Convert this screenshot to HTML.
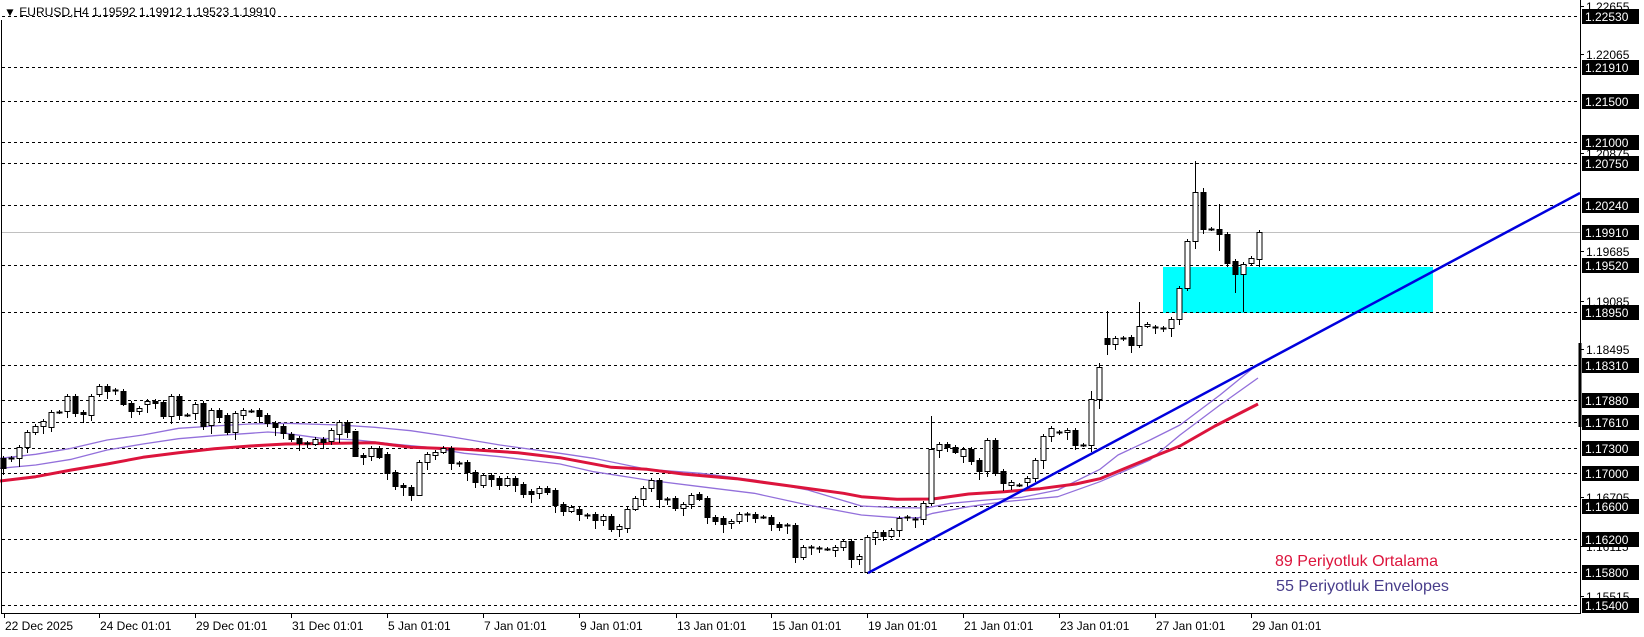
<!DOCTYPE html>
<html><head><meta charset="utf-8"><style>
html,body{margin:0;padding:0;background:#fff;}
svg{display:block;}
text{font-family:"Liberation Sans",sans-serif;}
</style></head><body>
<svg id="s" width="1644" height="637" xmlns="http://www.w3.org/2000/svg">
<rect width="1644" height="637" fill="#fff"/>
<g id="g"></g>
<text x="4" y="16" font-size="11.5" fill="#000" textLength="272" lengthAdjust="spacingAndGlyphs">▼ EURUSD,H4  1.19592 1.19912 1.19523 1.19910</text>
<text x="1275" y="566" font-size="16" fill="#dc143c" textLength="163" lengthAdjust="spacingAndGlyphs">89 Periyotluk Ortalama</text>
<text x="1276" y="591" font-size="16" fill="#483d8b" textLength="173" lengthAdjust="spacingAndGlyphs">55 Periyotluk Envelopes</text>
</svg>
<script>
var g=document.getElementById('g');var h='';
function Y(p){return 16+(1.2253-p)*8261;}
var boxed=['1.22530','1.21910','1.21500','1.21000','1.20750','1.20240','1.19910','1.19520','1.18950','1.18310','1.17880','1.17610','1.17300','1.17000','1.16600','1.16200','1.15800','1.15400'];
var plain=['1.22655','1.22065','1.20875','1.19685','1.19085','1.18495','1.16705','1.16115','1.15515'];
// cyan rect
h+='<rect x="1163" y="267" width="270" height="46" fill="#00ffff"/>';
boxed.forEach(function(s){var y=Math.round(Y(+s))+0.5;
 if(s==='1.19910')h+='<line x1="2" x2="1580" y1="'+y+'" y2="'+y+'" stroke="#c0c0c0" stroke-width="1"/>';
 else h+='<line x1="2" x2="1580" y1="'+y+'" y2="'+y+'" stroke="#000" stroke-width="1" stroke-dasharray="3,3"/>';});
function poly(pts,col,w){h+='<polyline fill="none" stroke="'+col+'" stroke-width="'+w+'" stroke-linejoin="round" points="'+pts.map(function(p){return p[0].toFixed(1)+','+p[1].toFixed(1)}).join(' ')+'"/>';}
function z4(a){return a.map(function(p){return [p[0]/2.8,340+p[1]/3]});}
function z5(a){return a.map(function(p){return [540+p[0]/2.8,380+p[1]/3]});}
var up=z4([[0,355],[100,343],[200,325],[300,300],[400,285],[500,265],[600,258],[700,252],[800,250],[950,255],[1050,262],[1150,272],[1250,288],[1400,315],[1568,340]]).concat(z5([[150,235],[300,268],[450,280],[600,300],[750,330],[900,378],[1000,383],[1080,384],[1150,370],[1250,360],[1350,352],[1450,330],[1568,268]])).concat([[1118,455],[1150,440],[1180,425],[1220,395],[1258,364]]);
var lo=z4([[0,385],[100,375],[200,358],[300,330],[400,312],[500,296],[600,287],[700,280],[750,276],[800,280],[900,295],[1000,300],[1100,312],[1200,322],[1300,340],[1400,350],[1568,372]]).concat(z5([[150,275],[300,300],[450,320],[600,340],[750,375],[900,405],[1000,413],[1060,413],[1100,400],[1200,380],[1300,365],[1450,350],[1568,305]])).concat([[1150,460],[1180,435],[1220,405],[1258,378]]);
var red=z4([[0,423],[100,410],[200,390],[300,372],[400,352],[500,338],[600,326],[700,318],[800,312],[950,310],[1050,308],[1150,322],[1300,328],[1450,338],[1568,353]]).concat(z5([[200,262],[300,268],[400,282],[550,296],[700,318],[850,340],[900,350],[1000,358],[1100,357],[1200,342],[1300,335],[1400,326],[1500,312],[1568,296]])).concat([[1150,458],[1180,446],[1215,426],[1258,404]]);
poly(up,'#9370db',1.3);poly(lo,'#9370db',1.3);poly(red,'#dc143c',3);
var A4=[['b',355,385],['d',355],['w',322,355],['w',277,322],['w',259,277],['w',243,259],['w',216,262],['d',216],['w',168,214],['b',168,218],['b',216,222],['w',168,224],['w',138,163],['b',138,152],['d',150],['b',152,191],['b',188,214],['w',204,214],['w',183,193],['b',183,188],['b',185,227],['w',168,227],['b',168,224],['d',224],['w',192,220],['b',188,259],['w',210,256],['b',210,230],['b',225,275],['w',219,275],['w',210,225],['d',214],['b',210,227],['b',225,250],['b',250,260],['b',258,280],['b',281,296],['b',294,308],['d',308],['w',297,311],['b',297,305],['w',271,304],['w',247,281],['b',247,276],['b',273,347],['b',346,350],['w',324,347],['b',324,350],['b',343,400],['b',396,437],['b',435,442],['b',441,464],['w',367,464],['w',343,367],['w',337,346],['w',325,337],['b',325,368],['d',368],['b',367,397],['b',397,427],['w',405,434],['b',405,417],['b',414,434],['w',414,434],['b',414,434],['b',432,462],['b',454,462],['w',445,460],['b',445,455],['b',450,495]];
var A5=[['b',373,393],['w',382,393],['b',387,403],['d',404],['b',403,421],['w',407,421],['b',409,448],['w',439,447],['w',388,443],['w',354,388],['w',325,358],['w',300,325],['b',300,358],['d',358],['b',353,383],['w',373,383],['w',344,373],['b',343,356],['b',355,412],['b',412,422],['b',414,432],['w',424,430],['w',402,424],['d',402],['b',402,413],['d',411],['b',411,433],['b',433,440],['d',436],['b',436,530],['w',502,530],['d',502],['d',505],['d',507],['w',502,510],['w',484,502],['b',484,538],['w',529,538],['w',472,577],['w',457,472],['b',457,467],['w',449,467],['w',413,449],['d',411],['d',418],['w',370,416],['w',207,370],['w',193,211],['b',193,201],['b',202,215],['w',207,227],['b',207,242],['b',240,272],['w',181,272],['b',181,278],['b',273,310],['w',306,316],['d',315],['w',295,307],['w',241,295],['w',169,241],['w',145,169],['d',155],['w',150,156],['b',150,194],['d',194],['w',58,194]];
var A9=[['w',367,399],['b',338,344],['w',338,344],['d',338],['b',337,345],['w',326,345],['w',324,326],['d',327],['d',328],['w',319,328],['w',288,319],['w',241,288],['w',192,241],['b',192,229],['d',229],['b',229,234],['b',234,263],['b',261,274],['w',264,274],['w',258,263],['w',232,259]];
var C=[];
A4.forEach(function(c){C.push([c[0],340+c[1]/3,340+(c[2]||c[1])/3]);});
A5.forEach(function(c){C.push([c[0],380+c[1]/3,380+(c[2]||c[1])/3]);});
A9.forEach(function(c){C.push([c[0],c[1],c[2]||c[1]]);});
var W={117:[416,null],137:[391,null],138:[363,409],139:[311,355],143:[302,348],150:[161,null],151:[188,null],153:[204,251],155:[null,293],156:[null,312],109:[null,574],107:[null,568],45:[null,430],53:[null,475],124:[null,null]};
C.forEach(function(c,i){var k=i+1;var x=3+8*(k-1)+0.5;var t=Math.round(c[1]),b=Math.round(c[2]);
 var hi=t-(2+(k*7)%7),lw=b+(2+(k*5)%8);
 if(W[k]){if(W[k][0]!=null)hi=W[k][0];if(W[k][1]!=null)lw=W[k][1];}
 h+='<line x1="'+x+'" x2="'+x+'" y1="'+hi+'" y2="'+lw+'" stroke="#000" stroke-width="1"/>';
 if(c[0]==='d'||b-t<1){h+='<line x1="'+(x-3)+'" x2="'+(x+3)+'" y1="'+(t+0.5)+'" y2="'+(t+0.5)+'" stroke="#000" stroke-width="2"/>';}
 else h+='<rect x="'+(x-2.5)+'" y="'+(t+0.5)+'" width="5" height="'+(b-t)+'" fill="'+(c[0]==='w'?'#fff':'#000')+'" stroke="#000" stroke-width="1"/>';
});
h+='<line x1="868" y1="573" x2="1580" y2="193" stroke="#0000dd" stroke-width="2.5"/>';
// frame
h+='<line x1="1.5" y1="20" x2="1.5" y2="614" stroke="#000"/>';
h+='<line x1="1" y1="613.5" x2="1580" y2="613.5" stroke="#000"/>';
h+='<line x1="1580.5" y1="0" x2="1580.5" y2="614" stroke="#000"/>';
h+='<line x1="1580" y1="343" x2="1580" y2="427" stroke="#000" stroke-width="3"/>';
plain.forEach(function(s){var y=Math.round(Y(+s));h+='<line x1="1580" x2="1584" y1="'+(y+0.5)+'" y2="'+(y+0.5)+'" stroke="#000"/><text x="1586" y="'+(y+5)+'" font-size="12" fill="#000">'+s+'</text>';});
boxed.forEach(function(s){var y=Math.round(Y(+s));h+='<rect x="1582" y="'+(y-7)+'" width="57" height="15" fill="#000"/><text x="1585" y="'+(y+5)+'" font-size="12" fill="#fff">'+s+'</text>';});
var d=[[4,'22 Dec 2025'],[99,'24 Dec 01:01'],[195,'29 Dec 01:01'],[291,'31 Dec 01:01'],[387,'5 Jan 01:01'],[483,'7 Jan 01:01'],[579,'9 Jan 01:01'],[676,'13 Jan 01:01'],[771,'15 Jan 01:01'],[867,'19 Jan 01:01'],[963,'21 Jan 01:01'],[1059,'23 Jan 01:01'],[1155,'27 Jan 01:01'],[1251,'29 Jan 01:01']];
d.forEach(function(a){h+='<line x1="'+(a[0]+0.5)+'" x2="'+(a[0]+0.5)+'" y1="613" y2="618" stroke="#000"/><text x="'+(a[0]+1)+'" y="630" font-size="12" fill="#000">'+a[1]+'</text>';});
g.innerHTML=h;
</script>
</body></html>
